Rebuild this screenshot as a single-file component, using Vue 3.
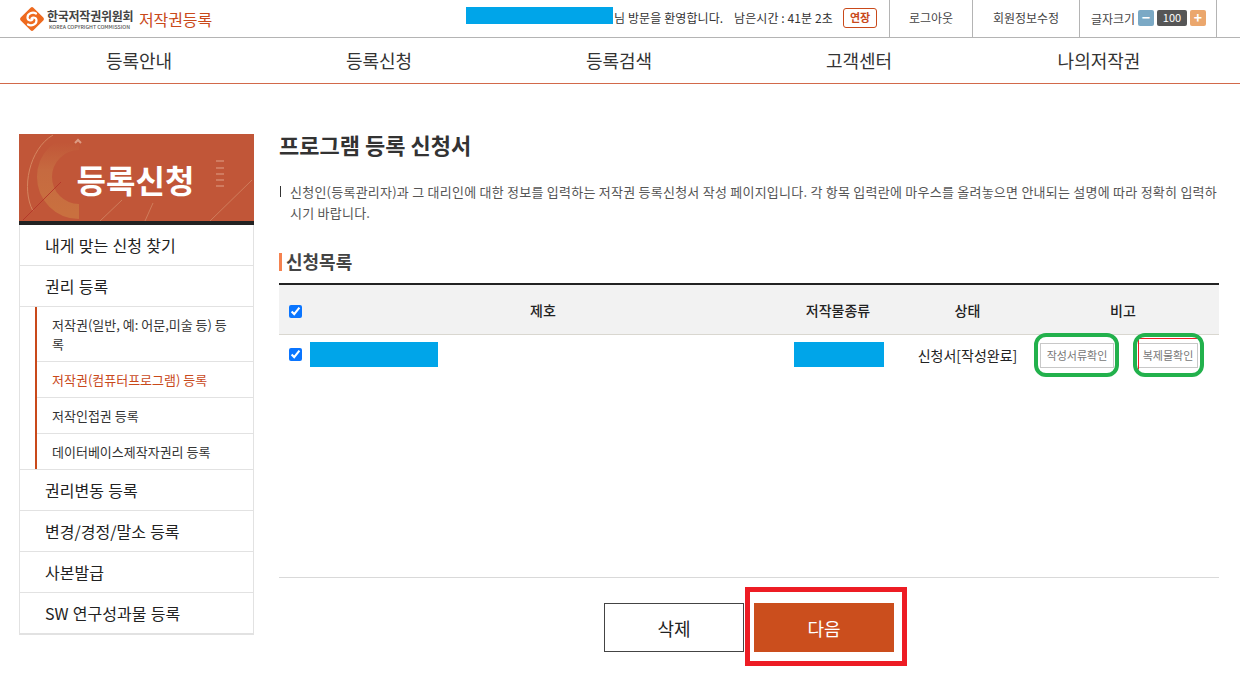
<template>
  <div class="page">
    <header class="top">
      <div class="brand">
        <svg class="logo" width="26" height="26" viewBox="0 0 26 26">
          <rect x="4" y="4" width="18" height="18" rx="2" transform="rotate(45 13 13)" fill="#ee6a1f"/>
          <path d="M17 7.500C13.500 5.500 8.500 7.500 8.500 11.500c0 3 3.500 3.500 5 2" fill="none" stroke="#fff" stroke-width="2.200" stroke-linecap="round"/>
          <path d="M9 18.500c3.500 2 8.500 0 8.500-4 0-3-3.500-3.500-5-2" fill="none" stroke="#fff" stroke-width="2.200" stroke-linecap="round"/>
        </svg>
        <div class="org">
          <div class="org-ko">한국저작권위원회</div>
          <div class="org-en">KOREA COPYRIGHT COMMISSION</div>
        </div>
        <div class="svc">저작권등록</div>
      </div>
      <div class="util">
        <span class="mask user"></span>
        <span class="welcome">님 방문을 환영합니다.</span>
        <span class="timer">남은시간 : 41분 2초</span>
        <span class="extend">연장</span>
        <a class="cell logout">로그아웃</a>
        <a class="cell profile">회원정보수정</a>
        <div class="cell font">
          <span class="font-label">글자크기</span>
          <i class="step minus">−</i>
          <i class="size">100</i>
          <i class="step plus">+</i>
        </div>
      </div>
    </header>

    <nav class="gnb">
      <a v-for="item in nav" :key="item">{{ item }}</a>
    </nav>

    <div class="body">
      <aside class="side">
        <div class="side-head">
          <svg class="deco" width="235" height="87" viewBox="0 0 235 87">
            <defs>
              <linearGradient id="ring" x1="0" y1="1" x2="0" y2="0">
                <stop offset="0" stop-color="#c9703f"/>
                <stop offset="0.6" stop-color="#c66a40"/>
                <stop offset="1" stop-color="#c15638"/>
              </linearGradient>
            </defs>
            <path d="M60 77.500A34.500 34.500 0 0 1 60 8.500" fill="none" stroke="url(#ring)" stroke-width="15"/>
            <path d="M14 77C2 55 10 15 34 1" fill="none" stroke="#d58660" stroke-width="1"/>
            <path d="M81 87L103 66M126 87L134 69M191 87L233 46" stroke="#cf7d5c" stroke-width="1" fill="none"/>
            <path d="M4 86L42 48" stroke="#b5392a" stroke-width="1" fill="none"/>
            <path d="M197 27h8M197 34h8M197 40h8M197 46h8M197 52h8" stroke="#e0a088" stroke-width="1" fill="none"/>
            <path d="M56 9l3-3 3 3" stroke="#dd9c84" stroke-width="2" fill="none"/>
          </svg>
          <span>등록신청</span>
        </div>
        <ul class="menu">
          <li>내게 맞는 신청 찾기</li>
          <li>권리 등록</li>
          <li class="subwrap">
            <ul class="sub">
              <li>저작권(일반, 예: 어문,미술 등) 등록</li>
              <li class="on">저작권(컴퓨터프로그램) 등록</li>
              <li>저작인접권 등록</li>
              <li>데이터베이스제작자권리 등록</li>
            </ul>
          </li>
          <li>권리변동 등록</li>
          <li>변경/경정/말소 등록</li>
          <li>사본발급</li>
          <li>SW 연구성과물 등록</li>
        </ul>
      </aside>

      <main class="main">
        <h1>프로그램 등록 신청서</h1>
        <p class="desc">신청인(등록관리자)과 그 대리인에 대한 정보를 입력하는 저작권 등록신청서 작성 페이지입니다. 각 항목 입력란에 마우스를 올려놓으면 안내되는 설명에 따라 정확히 입력하시기 바랍니다.</p>
        <h2>신청목록</h2>
        <div class="table">
          <div class="row head">
            <div class="c-check"><input type="checkbox" checked></div>
            <div class="c-title">제호</div>
            <div class="c-kind">저작물종류</div>
            <div class="c-state">상태</div>
            <div class="c-note">비고</div>
          </div>
          <div class="row data">
            <div class="c-check"><input type="checkbox" checked></div>
            <div class="c-title"><span class="mask title-mask"></span></div>
            <div class="c-kind"><span class="mask kind-mask"></span></div>
            <div class="c-state">신청서[작성완료]</div>
            <div class="c-note btns">
              <button class="mini doc">작성서류확인</button>
              <button class="mini copy">복제물확인</button>
            </div>
          </div>
        </div>
        <div class="actions">
          <button class="act del">삭제</button>
          <button class="act next">다음</button>
        </div>
      </main>
    </div>
  </div>
</template>

<script setup>
const nav = ['등록안내', '등록신청', '등록검색', '고객센터', '나의저작권']
</script>

<style>
html, body { margin: 0; background: #fff; }
</style>

<style scoped>
.page {
  width: 1240px;
  height: 681px;
  overflow: hidden;
  font-family: "Noto Sans CJK KR", "Noto Sans", sans-serif;
  color: #222;
}
.top {
  height: 37px;
  border-bottom: 1px solid #b4b4b4;
  display: flex;
  justify-content: space-between;
}
.brand { display: flex; align-items: center; padding-left: 19px; }
.logo { width: 26px; height: 26px; margin-right: 2px; }
.org { width: 87px; margin-right: 5px; }
.org-ko { font-size: 12px; font-weight: 700; line-height: 14px; color: #444; letter-spacing: -0.25px; white-space: nowrap; margin-top: 1px; }
.org-en { font-size: 5.200px; font-weight: 500; line-height: 7px; color: #555; white-space: nowrap; margin-left: 2px; }
.svc { font-size: 16px; color: #c9491a; line-height: 20px; letter-spacing: -0.1px; }
.util { display: flex; align-items: center; font-size: 12px; color: #333; line-height: 18px; margin-right: 23px; }
.mask { display: block; background: #00a5e9; }
.user { width: 147px; height: 17px; margin-top: -6px; }
.welcome { margin-left: 1px; width: 120px; white-space: nowrap; letter-spacing: 0.1px; margin-top: -1px; }
.timer { width: 109px; white-space: nowrap; letter-spacing: 0.1px; margin-top: -1px; }
.extend {
  box-sizing: border-box;
  width: 34px;
  height: 20px;
  margin-top: -1px;
  margin-right: 12px;
  border: 1px solid #c9491a;
  border-radius: 3px;
  color: #c9491a;
  font-weight: 700;
  font-size: 11px;
  line-height: 17px;
  text-align: center;
}
.cell {
  align-self: stretch;
  border-left: 1px solid #b4b4b4;
  box-sizing: border-box;
  text-align: center;
  font-size: 12px;
  line-height: 35px;
  white-space: nowrap;
  color: #444;
}
.logout { width: 83px; }
.profile { width: 107px; }
.font {
  width: 138px;
  border-right: 1px solid #b4b4b4;
  display: flex;
  align-items: center;
  padding-left: 11px;
}
.font-label { width: 47px; text-align: left; }
.font i {
  font-style: normal;
  display: block;
  flex: none;
  text-align: center;
  color: #fff;
  height: 16px;
  line-height: 15px;
  border-radius: 2px;
  margin-top: -1px;
}
.step { width: 16px; font-weight: 700; font-size: 14px; }
.minus { background: #7ba9c5; margin-right: 3px; }
.plus { background: #eba76d; margin-left: 3px; }
.size { width: 30px; background: #565656; font-size: 11px; }

.gnb {
  height: 45px;
  border-bottom: 1px solid #d2694a;
  display: grid;
  grid-template-columns: repeat(5, 240px);
  padding-left: 19px;
}
.gnb a { text-align: center; font-size: 18px; line-height: 44px; color: #333; }

.body { display: flex; align-items: flex-start; padding: 50px 21px 0 19px; }
.side { width: 235px; flex: none; margin-right: 25px; }
.side-head {
  position: relative;
  height: 87px;
  background: #c15638;
  border-bottom: 4px solid #222;
  display: flex;
  align-items: center;
  justify-content: center;
  color: #fff;
  font-size: 32px;
  font-weight: 700;
  overflow: hidden;
}
.side-head span { position: relative; margin-top: 3px; margin-left: -2px; line-height: 40px; }
.deco { position: absolute; left: 0; top: 0; }
.menu { list-style: none; margin: 0; padding: 0; border: 1px solid #e2e2e2; border-top: 0; }
.menu > li {
  height: 40px;
  line-height: 41px;
  padding-left: 25px;
  border-bottom: 1px solid #e2e2e2;
  font-size: 16px;
  word-spacing: 0.7px;
  color: #222;
}
.menu > li.subwrap { height: auto; line-height: inherit; padding: 0 0 0 15px; }
.sub { list-style: none; margin: 0; padding: 0; border-left: 2px solid #c9491a; }
.sub li {
  padding: 8px 17px 8px 15px;
  font-size: 13px;
  line-height: 19px;
  word-spacing: 0;
  border-bottom: 1px solid #e2e2e2;
  color: #333;
}
.sub li:last-child { border-bottom: 0; }
.sub li.on { color: #c9491a; }

.main { flex: 1; min-width: 0; }
h1 { margin: 0; font-size: 22px; line-height: 20px; font-weight: 700; color: #333; }
.desc {
  margin: 27px 0 0;
  padding-left: 11px;
  font-size: 13px;
  line-height: 21px;
  color: #555;
  position: relative;
  letter-spacing: 0.24px;
}
.desc::before { content: ""; position: absolute; left: 1px; top: 5px; width: 1px; height: 11px; background: #333; }
h2 {
  margin: 30px 0 0;
  font-size: 18px;
  font-weight: 700;
  line-height: 16px;
  padding-bottom: 2px;
  color: #444;
  border-left: 3px solid #f5824f;
  padding-left: 4px;
}
.table { margin-top: 12px; border-top: 2px solid #222; }
.row { display: flex; align-items: center; }
.row.head { height: 49px; background: #f2f2f2; border-bottom: 1px solid #d9d7d0; font-size: 14px; font-weight: 500; color: #222; }
.row.head .c-check { margin-top: 3px; }
.row.data { height: 40px; font-size: 14px; }
.c-check { width: 31px; flex: none; padding-left: 10px; box-sizing: border-box; display: flex; align-items: center; }
.row.data .c-check { margin-top: -1px; }
.c-check input { margin: 0; width: 13px; height: 13px; accent-color: #0a75ff; }
.c-title { width: 466px; flex: none; text-align: center; }
.c-kind { width: 124px; flex: none; text-align: center; }
.c-state { width: 135px; flex: none; text-align: center; }
.c-note { flex: 1; text-align: center; padding-right: 8px; }
.row.data .c-state { margin-top: -1px; }
.title-mask { width: 128px; height: 25px; margin-top: -1px; }
.kind-mask { width: 90px; height: 25px; margin: -1px auto 0 18px; }
.c-note.btns { display: flex; padding: 0 0 0 5px; gap: 24px; align-items: center; }
.mini {
  position: relative;
  box-sizing: border-box;
  height: 25px;
  padding: 0;
  background: #fff;
  border: 1px solid #c8c8c8;
  font-family: inherit;
  font-size: 11px;
  color: #777;
  flex: none;
}
.doc { width: 74px; }
.copy { width: 60px; }
.mini::after {
  content: "";
  position: absolute;
  left: -7px;
  top: -11px;
  right: -6px;
  bottom: -10px;
  border: 4px solid #22b14c;
  border-radius: 12px;
}
.copy::before {
  content: "";
  position: absolute;
  left: -1px;
  top: -6px;
  right: -2px;
  bottom: -3px;
  border: 1px solid #ed1c24;
  border-bottom-color: transparent;
  border-right-color: transparent;
}
.copy::after { right: -7px; left: -6px; }
.actions {
  margin-top: 202px;
  border-top: 1px solid #d9d9d9;
  display: flex;
  justify-content: center;
  padding-top: 25px;
  gap: 10px;
}
.act {
  box-sizing: border-box;
  width: 140px;
  height: 49px;
  font-family: inherit;
  font-size: 18px;
  padding: 0;
}
.del { background: #fff; border: 1px solid #444; color: #222; }
.next { position: relative; background: #cb4e1d; border: 0; color: #fff; }
.next::after {
  content: "";
  position: absolute;
  left: -9px;
  top: -16px;
  right: -13px;
  bottom: -14px;
  border: 5px solid #ed1c24;
}
</style>
